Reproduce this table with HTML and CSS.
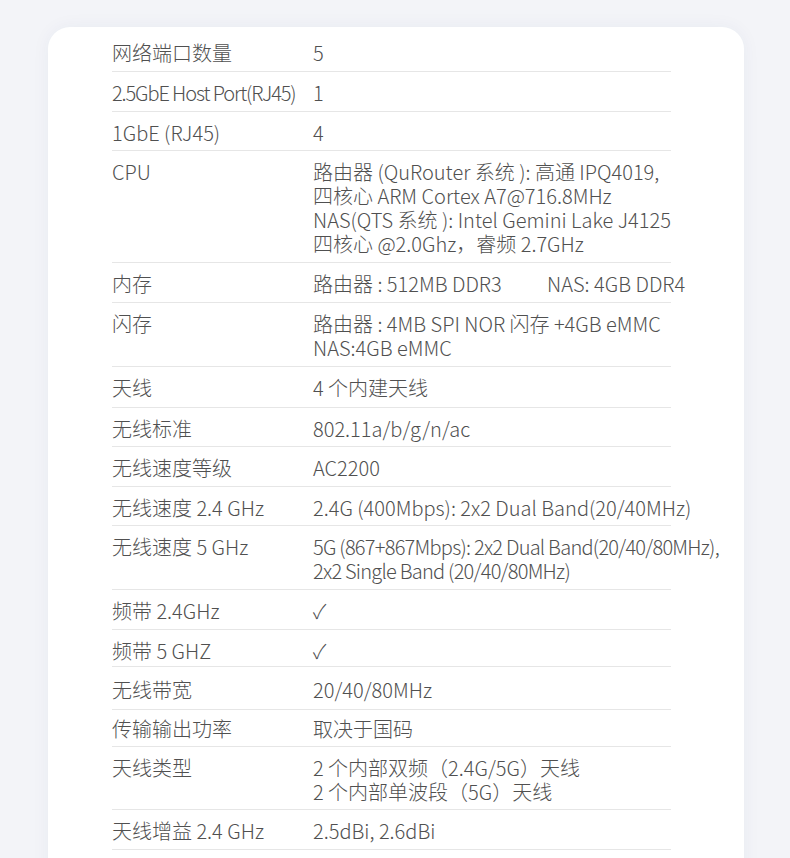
FILE: index.html
```html
<!DOCTYPE html>
<html lang="zh-CN">
<head>
  <meta charset="UTF-8" />
  <meta name="viewport" content="width=device-width, initial-scale=1.0"/>
  <title>规格 - QuRouter</title>
  <link rel="stylesheet" href="styles.css">
</head>
<body>
  <main class="spec-card">
    <table class="spec-table">
      <tbody>
        <tr><td>网络端口数量</td><td>5</td></tr>
        <tr><td class="tighter">2.5GbE Host Port(RJ45)</td><td>1</td></tr>
        <tr class="row-short"><td>1GbE (RJ45)</td><td>4</td></tr>
        <tr>
          <td>CPU</td>
          <td>路由器 (QuRouter 系统 ): 高通 IPQ4019,<br>四核心 ARM Cortex A7@716.8MHz<br>NAS(QTS 系统 ): Intel Gemini Lake J4125<br>四核心 @2.0Ghz，睿频 2.7GHz</td>
        </tr>
        <tr><td>内存</td><td>路由器 : 512MB DDR3 <span class="gap">NAS: 4GB DDR4</span></td></tr>
        <tr><td>闪存</td><td>路由器 : 4MB SPI NOR 闪存 +4GB eMMC<br>NAS:4GB eMMC</td></tr>
        <tr class="row-tall"><td>天线</td><td>4 个内建天线</td></tr>
        <tr class="row-short"><td>无线标准</td><td>802.11a/b/g/n/ac</td></tr>
        <tr><td>无线速度等级</td><td>AC2200</td></tr>
        <tr class="row-short"><td>无线速度 2.4 GHz</td><td>2.4G (400Mbps): 2x2 Dual Band(20/40MHz)</td></tr>
        <tr><td>无线速度 5 GHz</td><td class="tight">5G (867+867Mbps): 2x2 Dual Band(20/40/80MHz),<br>2x2 Single Band (20/40/80MHz)</td></tr>
        <tr><td>频带 2.4GHz</td><td>✓</td></tr>
        <tr class="row-min"><td>频带 5 GHZ</td><td>✓</td></tr>
        <tr class="row-wide"><td>无线带宽</td><td>20/40/80MHz</td></tr>
        <tr class="row-min row-up"><td>传输输出功率</td><td>取决于国码</td></tr>
        <tr class="row-short"><td>天线类型</td><td>2 个内部双频（2.4G/5G）天线<br>2 个内部单波段（5G）天线</td></tr>
        <tr><td>天线增益 2.4 GHz</td><td>2.5dBi, 2.6dBi</td></tr>
      </tbody>
    </table>
  </main>
</body>
</html>
```

FILE: styles.css
```css
:root {
  --bg: #f3f4f8;
  --card: #ffffff;
  --text: #505050;
  --line: #e6e6e6;
}

body {
  margin: 0;
  font-family: "Noto Sans CJK SC", "Noto Sans", sans-serif;
  background-color: var(--bg);
  color: var(--text);
}

.spec-card {
  width: 632px;
  margin: 27px 46px 0 48px;
  padding: 5px 0 40px 64px;
  background: var(--card);
  border-radius: 22px;
  box-shadow: 0 0 18px rgba(40, 60, 120, 0.05);
  min-height: 900px;
}

.spec-table {
  width: 559px;
  table-layout: fixed;
  border-collapse: collapse;
  font-size: 20px;
  line-height: 24px;
  font-weight: 300;
}

.spec-table td {
  padding: 9px 0 6px;
  border-bottom: 1px solid var(--line);
  vertical-align: top;
  text-align: left;
  white-space: nowrap;
}

.spec-table td:first-child {
  width: 201px;
}

/* row height tweaks */
.row-short td {
  padding-bottom: 5px;
}

.row-tall td {
  padding-bottom: 7px;
}

.row-min td {
  padding-bottom: 3px;
}

.row-wide td {
  padding: 11px 0 7px;
}

.row-up td {
  padding-top: 7px;
  padding-bottom: 5px;
}

.spec-table .tight {
  letter-spacing: -0.75px;
}

.spec-table .tighter {
  letter-spacing: -1.1px;
}

.gap {
  margin-left: 41px;
}
```
